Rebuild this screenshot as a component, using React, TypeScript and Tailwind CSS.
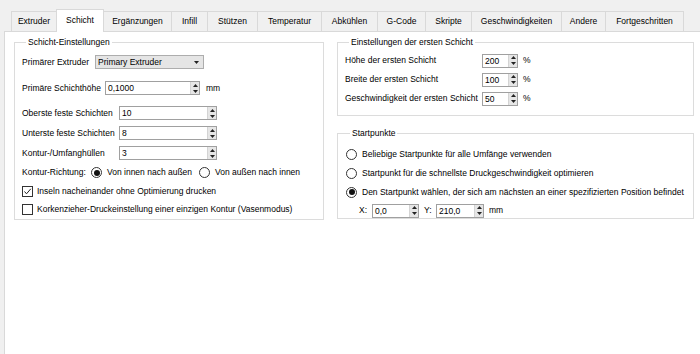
import React from "react";

const tabs: { label: string; w: string; sel?: boolean }[] = [
  { label: "Extruder", w: "w-[46px]" },
  { label: "Schicht", w: "w-[48px]", sel: true },
  { label: "Ergänzungen", w: "w-[68px]" },
  { label: "Infill", w: "w-[36px]" },
  { label: "Stützen", w: "w-[50px]" },
  { label: "Temperatur", w: "w-[64px]" },
  { label: "Abkühlen", w: "w-[56px]" },
  { label: "G-Code", w: "w-[48px]" },
  { label: "Skripte", w: "w-[46px]" },
  { label: "Geschwindigkeiten", w: "w-[90px]" },
  { label: "Andere", w: "w-[44px]" },
  { label: "Fortgeschritten", w: "w-[78px]" },
];

function Arrows() {
  return (
    <div className="w-[9px] h-full flex flex-col bg-[#e6e6e6] border-l border-[#d4d4d4]">
      <div className="flex-1 flex items-center justify-center">
        <svg width="5" height="3" viewBox="0 0 5 3">
          <polygon points="2.5,0 5,3 0,3" fill="#222" />
        </svg>
      </div>
      <div className="flex-1 flex items-center justify-center">
        <svg width="5" height="3" viewBox="0 0 5 3">
          <polygon points="0,0 5,0 2.5,3" fill="#222" />
        </svg>
      </div>
    </div>
  );
}

function Spin({ w, v }: { w: string; v: string }) {
  return (
    <div className={`${w} h-[14px] flex border border-[#a0a0a0] bg-white`}>
      <div className="flex-1 pl-[2px] leading-[12px]">{v}</div>
      <Arrows />
    </div>
  );
}

function Radio({ on }: { on?: boolean }) {
  return (
    <div className="w-[11px] h-[11px] rounded-full border border-[#333] bg-white flex items-center justify-center shrink-0">
      {on && <div className="w-[6px] h-[6px] rounded-full bg-[#111]" />}
    </div>
  );
}

function Check({ on }: { on?: boolean }) {
  return (
    <div className="w-[11px] h-[11px] border border-[#333] bg-white flex items-center justify-center shrink-0">
      {on && (
        <svg width="9" height="9" viewBox="0 0 9 9">
          <polyline points="1.5,4.5 3.5,6.8 7.8,1.8" fill="none" stroke="#222" strokeWidth="1" />
        </svg>
      )}
    </div>
  );
}

function Group({ title, className, children }: { title: string; className: string; children: React.ReactNode }) {
  return (
    <fieldset className={`${className} border border-[#dcdcdc]`}>
      <legend className="ml-[4px] px-[2px] leading-[12px]">{title}</legend>
      {children}
    </fieldset>
  );
}

export default function App() {
  return (
    <div className="w-[700px] h-[354px] overflow-hidden bg-[#f0f0f0] flex flex-col font-['Liberation_Sans',Arial,sans-serif] text-[8.5px] text-black">
      <div className="h-[31px] flex items-end pl-[11px] shrink-0">
        {tabs.map((t, i) =>
          t.sel ? (
            <div
              key={t.label}
              className={`${t.w} h-[23px] -mb-px -ml-px relative z-10 bg-white border-t border-l border-r border-[#d9d9d9] flex items-center justify-center pb-[2px]`}
            >
              {t.label}
            </div>
          ) : (
            <div
              key={t.label}
              className={`${t.w} h-[20px] bg-[#f0f0f0] border-t border-r border-[#d9d9d9] ${i === 0 ? "border-l" : ""} flex items-center justify-center`}
            >
              {t.label}
            </div>
          )
        )}
      </div>
      <div className="flex-1 ml-[4px] bg-white border-l border-t border-[#d9d9d9] flex items-start pl-[9px] pt-[4px] gap-[13px]">
        <Group title="Schicht-Einstellungen" className="w-[310px] h-[184px] px-[7px]">
          <div className="h-[20px] mt-[4px] flex items-center">
            <span className="w-[73px]">Primärer Extruder</span>
            <div className="w-[109px] h-[14px] bg-[#e5e5e5] border border-[#adadad] flex items-center pl-[2px] pr-[4px]">
              <span className="flex-1">Primary Extruder</span>
              <svg width="5" height="3" viewBox="0 0 5 3">
                <polygon points="0,0 5,0 2.5,3" fill="#222" />
              </svg>
            </div>
          </div>
          <div className="h-[20px] mt-[6px] flex items-center">
            <span className="w-[83px]">Primäre Schichthöhe</span>
            <Spin w="w-[95px]" v="0,1000" />
            <span className="ml-[6px]">mm</span>
          </div>
          <div className="h-[20px] mt-[5px] flex items-center">
            <span className="w-[97px]">Oberste feste Schichten</span>
            <Spin w="w-[98px]" v="10" />
          </div>
          <div className="h-[20px] flex items-center">
            <span className="w-[97px]">Unterste feste Schichten</span>
            <Spin w="w-[98px]" v="8" />
          </div>
          <div className="h-[20px] flex items-center">
            <span className="w-[97px]">Kontur-/Umfanghüllen</span>
            <Spin w="w-[98px]" v="3" />
          </div>
          <div className="h-[19px] flex items-center">
            <span className="w-[69px]">Kontur-Richtung:</span>
            <Radio on />
            <span className="ml-[5px] w-[92px]">Von innen nach außen</span>
            <Radio />
            <span className="ml-[5px]">Von außen nach innen</span>
          </div>
          <div className="h-[18px] flex items-center">
            <Check on />
            <span className="ml-[4px]">Inseln nacheinander ohne Optimierung drucken</span>
          </div>
          <div className="h-[19px] flex items-center">
            <Check />
            <span className="ml-[4px]">Korkenzieher-Druckeinstellung einer einzigen Kontur (Vasenmodus)</span>
          </div>
        </Group>
        <div className="w-[357px] flex flex-col gap-[11px]">
          <Group title="Einstellungen der ersten Schicht" className="h-[80px] px-[7px]">
            <div className="h-[19px] mt-[3px] flex items-center">
              <span className="w-[137px]">Höhe der ersten Schicht</span>
              <Spin w="w-[36px]" v="200" />
              <span className="ml-[5px]">%</span>
            </div>
            <div className="h-[19px] flex items-center">
              <span className="w-[137px]">Breite der ersten Schicht</span>
              <Spin w="w-[36px]" v="100" />
              <span className="ml-[5px]">%</span>
            </div>
            <div className="h-[19px] flex items-center">
              <span className="w-[137px]">Geschwindigkeit der ersten Schicht</span>
              <Spin w="w-[36px]" v="50" />
              <span className="ml-[5px]">%</span>
            </div>
          </Group>
          <Group title="Startpunkte" className="h-[92px] px-[8px]">
            <div className="h-[19px] mt-[6px] flex items-center">
              <Radio />
              <span className="ml-[5px]">Beliebige Startpunkte für alle Umfänge verwenden</span>
            </div>
            <div className="h-[19px] flex items-center">
              <Radio />
              <span className="ml-[5px]">Startpunkt für die schnellste Druckgeschwindigkeit optimieren</span>
            </div>
            <div className="h-[18px] flex items-center">
              <Radio on />
              <span className="ml-[5px]">Den Startpunkt wählen, der sich am nächsten an einer spezifizierten Position befindet</span>
            </div>
            <div className="h-[19px] flex items-center pl-[13px]">
              <span className="w-[13px]">X:</span>
              <Spin w="w-[47px]" v="0,0" />
              <span className="ml-[5px] w-[12px]">Y:</span>
              <Spin w="w-[48px]" v="210,0" />
              <span className="ml-[5px]">mm</span>
            </div>
          </Group>
        </div>
      </div>
    </div>
  );
}
